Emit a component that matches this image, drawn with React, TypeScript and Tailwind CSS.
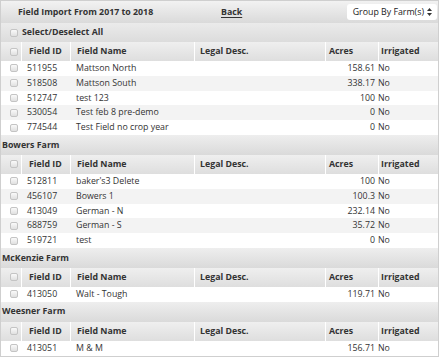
import React from "react";

type Row = { id: string; name: string; acres: string };

const GROUPS: { farm: string | null; rows: Row[] }[] = [
  {
    farm: null,
    rows: [
      { id: "511955", name: "Mattson North", acres: "158.61" },
      { id: "518508", name: "Mattson South", acres: "338.17" },
      { id: "512747", name: "test 123", acres: "100" },
      { id: "530054", name: "Test feb 8 pre-demo", acres: "0" },
      { id: "774544", name: "Test Field no crop year", acres: "0" },
    ],
  },
  {
    farm: "Bowers Farm",
    rows: [
      { id: "512811", name: "baker's3 Delete", acres: "100" },
      { id: "456107", name: "Bowers 1", acres: "100.3" },
      { id: "413049", name: "German - N", acres: "232.14" },
      { id: "688759", name: "German - S", acres: "35.72" },
      { id: "519721", name: "test", acres: "0" },
    ],
  },
  {
    farm: "McKenzie Farm",
    rows: [{ id: "413050", name: "Walt - Tough", acres: "119.71" }],
  },
  {
    farm: "Weesner Farm",
    rows: [{ id: "413051", name: "M & M", acres: "156.71" }],
  },
];

function Checkbox() {
  return (
    <span className="block w-[8px] h-[8px] rounded-[2px] border border-[#c4c4c4] bg-linear-to-b from-[#fafafa] to-[#e0e0e0]" />
  );
}

function HeaderRow() {
  return (
    <div className="grid grid-cols-[21px_49px_124px_131px_53px_1fr] h-[19px] font-bold">
      <div className="flex items-center pl-[9px] border-r border-white bg-linear-to-b from-[#efefef] to-[#dedede]">
        <Checkbox />
      </div>
      <div className="flex items-center pl-[7px] border-r border-white bg-linear-to-b from-[#efefef] to-[#dedede]">
        Field ID
      </div>
      <div className="flex items-center pl-[6px] border-r border-white bg-linear-to-b from-[#efefef] to-[#dedede]">
        Field Name
      </div>
      <div className="flex items-center pl-[5px] border-r border-white bg-linear-to-b from-[#efefef] to-[#dedede]">
        Legal Desc.
      </div>
      <div className="flex items-center pl-[3px] border-r border-white bg-linear-to-b from-[#efefef] to-[#dedede]">
        Acres
      </div>
      <div className="flex items-center pl-[2px] bg-linear-to-b from-[#efefef] to-[#dedede]">
        Irrigated
      </div>
    </div>
  );
}

function DataRow({ row, odd }: { row: Row; odd: boolean }) {
  return (
    <div
      className={`grid grid-cols-[21px_49px_124px_131px_49px_1fr] h-[14.8px] items-center ${
        odd ? "bg-[#f3f3f3]" : "bg-white"
      }`}
    >
      <div className="pl-[9px]">
        <Checkbox />
      </div>
      <div className="pl-[5px]">{row.id}</div>
      <div className="pl-[5px]">{row.name}</div>
      <div />
      <div className="text-right">{row.acres}</div>
      <div className="pl-[3px]">No</div>
    </div>
  );
}

export default function App() {
  return (
    <div
      className="w-[439px] h-[357px] bg-white text-[#333] text-[8.8px] leading-none"
      style={{ fontFamily: '"Open Sans", "DejaVu Sans", sans-serif' }}
    >
      <div className="border border-[#cfcfcf]">
        {/* Title bar */}
        <div className="flex items-center h-[22px] bg-linear-to-b from-[#f2f2f2] to-[#dadada] font-bold">
          <div className="pl-[17px] w-[220px]">Field Import From 2017 to 2018</div>
          <div className="underline underline-offset-[2px]">Back</div>
          <div className="ml-auto mr-[1px] flex items-center gap-[3px] h-[16px] pl-[6px] pr-[5px] bg-white rounded-[3px] font-normal text-[#222]">
            Group By Farm(s)
            <svg width="5" height="8" viewBox="0 0 5 8" fill="#333">
              <path d="M2.5 0 L5 3 L0 3 Z" />
              <path d="M0 5 L5 5 L2.5 8 Z" />
            </svg>
          </div>
        </div>

        {/* Select all */}
        <div className="flex items-center gap-[4px] h-[19px] pl-[9px] bg-linear-to-b from-[#ebebeb] to-[#dcdcdc] font-bold">
          <Checkbox />
          Select/Deselect All
        </div>

        {GROUPS.map((g, gi) => (
          <div key={gi}>
            {g.farm && (
              <div className="flex items-center h-[20px] pl-[1px] bg-linear-to-b from-[#eeeeee] to-[#dadada] font-bold">
                {g.farm}
              </div>
            )}
            <HeaderRow />
            {g.rows.map((r, ri) => (
              <DataRow key={r.id} row={r} odd={ri % 2 === 1} />
            ))}
          </div>
        ))}
      </div>
    </div>
  );
}
